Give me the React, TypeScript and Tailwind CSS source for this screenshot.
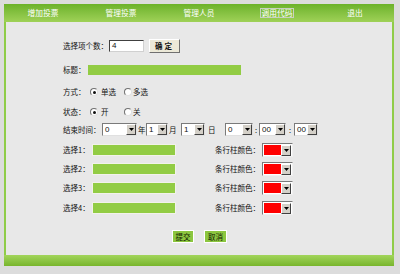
import React from "react";

const font = { fontFamily: '"Noto Sans CJK SC", "Noto Sans", sans-serif' };

function Arrow() {
  return (
    <span className="flex h-[11px] w-[10px] items-center justify-center border border-t-white border-l-white border-b-[#404040] border-r-[#404040] bg-[#d4d0c8]">
      <svg width="5" height="3" viewBox="0 0 5 3">
        <polygon points="0,0 5,0 2.5,3" fill="#000" />
      </svg>
    </span>
  );
}

function Select({ w, v }: { w: string; v: string }) {
  return (
    <span className={`flex h-[13px] ${w} items-center justify-between border border-t-[#7a7a7a] border-l-[#7a7a7a] border-b-[#e0e0e0] border-r-[#e0e0e0] bg-white pl-[2px] pr-[0px]`}>
      <span className="text-[8px] leading-none text-[#111]" style={{ fontFamily: '"Liberation Sans", sans-serif' }}>{v}</span>
      <Arrow />
    </span>
  );
}

function ColorSelect() {
  return (
    <span className="flex h-[14px] w-[31px] items-center border border-t-[#7a7a7a] border-l-[#7a7a7a] border-b-[#f0f0f0] border-r-[#f0f0f0] bg-white p-[1px]">
      <span className="h-full w-[19px] bg-[#ff0000]" />
      <span className="ml-auto"><Arrow /></span>
    </span>
  );
}

function Radio({ on }: { on?: boolean }) {
  return (
    <span className="flex h-[8px] w-[8px] items-center justify-center rounded-full border border-t-[#707070] border-l-[#707070] border-b-[#e0e0e0] border-r-[#e0e0e0] bg-white">
      {on && <span className="h-[3px] w-[3px] rounded-full bg-[#111]" />}
    </span>
  );
}

export default function App() {
  const menu = ["增加投票", "管理投票", "管理人员", "调用代码", "退出"];
  return (
    <div className="h-[274px] w-[400px] bg-[#dcdcdc] pl-[4px] pt-[4px] text-[7.5px] text-[#111]" style={font}>
      <div className="flex w-[390px] flex-col">
        <div className="grid h-[18px] grid-cols-5 items-center bg-gradient-to-b from-[#6cb229] to-[#9fd157] text-white text-[7.7px]">
          {menu.map((m) => (
            <div key={m} className="flex justify-center">
              <span className={m === "调用代码" ? "border border-[#c8d0c0] px-[1px] leading-[8px]" : "leading-[8px]"}>{m}</span>
            </div>
          ))}
        </div>
        <div className="flex h-[233px] flex-col border-x-2 border-[#8fcc48] bg-[#e8e8e8] pl-[57px]">
          <div className="mt-[17px] flex h-[14px] items-center">
            <span className="w-[46px]">选择项个数：</span>
            <span className="flex h-[12px] w-[35px] items-center border border-t-[#404040] border-l-[#404040] border-b-[#d0d0d0] border-r-[#d0d0d0] bg-white pl-[2px] text-[8px]" style={{ fontFamily: '"Liberation Sans", sans-serif' }}>4</span>
            <span className="ml-[5px] flex h-[14px] w-[31px] items-center justify-center border border-t-white border-l-white border-b-[#707070] border-r-[#707070] bg-[#ece9d8] font-bold tracking-[2px]">确定</span>
          </div>
          <div className="mt-[10px] flex h-[14px] items-center">
            <span className="w-[25px]">标题：</span>
            <span className="h-[10px] w-[153px] bg-[#92cc44]" />
          </div>
          <div className="mt-[8px] flex h-[14px] items-center">
            <span className="w-[27px]">方式：</span>
            <Radio on />
            <span className="ml-[3px] w-[23px]">单选</span>
            <Radio />
            <span className="ml-[1px]">多选</span>
          </div>
          <div className="mt-[6px] flex h-[14px] items-center">
            <span className="w-[27px]">状态：</span>
            <Radio on />
            <span className="ml-[3px] w-[23px]">开</span>
            <Radio />
            <span className="ml-[1px]">关</span>
          </div>
          <div className="mt-[4px] flex h-[13px] items-center">
            <span className="w-[39px]">结束时间：</span>
            <Select w="w-[35px]" v="0" />
            <span className="w-[9px] pl-[1px]">年</span>
            <Select w="w-[22px]" v="1" />
            <span className="w-[13px] pl-[1px]">月</span>
            <Select w="w-[24px]" v="1" />
            <span className="w-[20px] pl-[3px]">日</span>
            <Select w="w-[28px]" v="0" />
            <span className="w-[6px] text-center">:</span>
            <Select w="w-[27px]" v="00" />
            <span className="w-[8px] text-center">:</span>
            <Select w="w-[24px]" v="00" />
          </div>
          {[1, 2, 3, 4].map((n, i) => (
            <div key={n} className={`flex h-[14px] items-center ${i === 0 ? "mt-[7px]" : i === 3 ? "mt-[6px]" : "mt-[5px]"}`}>
              <span className="w-[29px]">选择{n}：</span>
              <span className="h-[12px] w-[84px] border border-[#f2f2ea] bg-[#92cc44]" />
              <span className="ml-[39px] w-[47px]">条行柱颜色：</span>
              <ColorSelect />
            </div>
          ))}
          <div className="ml-[109px] mt-[15px] flex h-[13px] items-center gap-[10px]">
            <span className="flex h-[13px] w-[22px] items-center justify-center border border-white bg-[#8cc63f] text-[#102000]">提交</span>
            <span className="flex h-[13px] w-[23px] items-center justify-center border border-white bg-[#8cc63f] text-[#102000]">取消</span>
          </div>
        </div>
        <div className="h-[11px] bg-gradient-to-b from-[#a2d55a] to-[#78b52c]" />
      </div>
    </div>
  );
}
